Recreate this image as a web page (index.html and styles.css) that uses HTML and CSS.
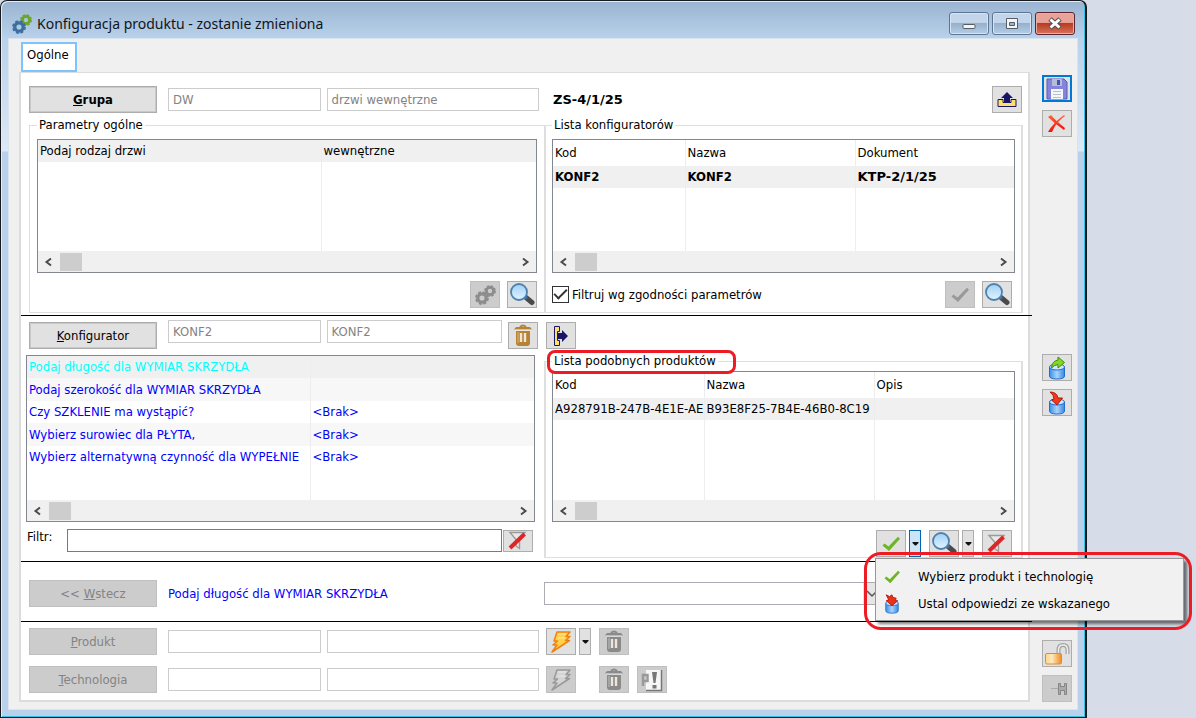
FILE: index.html
```html
<!DOCTYPE html>
<html lang="pl">
<head>
<meta charset="utf-8">
<title>Konfiguracja produktu - zostanie zmieniona</title>
<link rel="stylesheet" href="styles.css">
</head>
<body>
<svg class="sprite" aria-hidden="true">
  <defs>
    <linearGradient id="g-lens" x1="0" y1="0" x2="0" y2="1"><stop offset="0" stop-color="#9fd0f5"/><stop offset="1" stop-color="#e2f4ff"/></linearGradient>
    <linearGradient id="g-can" x1="0" y1="0" x2="1" y2="0"><stop offset="0" stop-color="#3b8ee8"/><stop offset=".5" stop-color="#a9d3fb"/><stop offset="1" stop-color="#3b86dd"/></linearGradient>
    <linearGradient id="g-lock" x1="0" y1="0" x2="1" y2="0"><stop offset="0" stop-color="#fdd58a"/><stop offset=".4" stop-color="#fde9bd"/><stop offset="1" stop-color="#f08a1e"/></linearGradient>
    <linearGradient id="g-x" x1="0" y1="0" x2="0" y2="1"><stop offset="0" stop-color="#ff6a3a"/><stop offset="1" stop-color="#ee1010"/></linearGradient>
  </defs>
  <symbol id="gear" viewBox="0 0 12 12"><g fill="none" stroke="currentColor"><circle cx="6" cy="6" r="3.600" stroke-width="2.800"/><circle cx="6" cy="6" r="5.2" stroke-width="1.400" stroke-dasharray="2.500 1.584"/></g></symbol>
  <symbol id="lens" viewBox="0 0 26 24"><path d="M17 14.500l6 5" stroke="#4a4a4a" stroke-width="5" stroke-linecap="round"/><path d="M15 13l3 2.500" stroke="#41749f" stroke-width="3"/><circle cx="10" cy="9" r="8" fill="url(#g-lens)" stroke="#4e81ad" stroke-width="1.800"/></symbol>
  <symbol id="tick" viewBox="0 0 20 16"><path d="M1.500 9.500l2-2 4 3L17 .8l2 2L8 15z" fill="currentColor"/></symbol>
  <symbol id="trash" viewBox="0 0 20 24"><path d="M7 3q3-3 6 0" fill="none" stroke="currentColor" stroke-width="2"/><path d="M1 5.500l2-2.500h14l2 2.500z" fill="currentColor"/><path d="M2 6h16" stroke="#fff" stroke-opacity=".45" stroke-width="1"/><path d="M3 7h14v12q0 3-3 3H6q-3 0-3-3z" fill="currentColor"/><path d="M8 9v9M12 9v9" stroke="#eee6da" stroke-width="2.400"/><path d="M5 8v11" stroke="#fff" stroke-opacity=".3" stroke-width="1.500"/></symbol>
  <symbol id="bolt" viewBox="0 0 24 24"><path d="M8 2h13l-4 4.500h4l-4.500 4h4L3 22l5-7H4l4.500-4H5z" fill="var(--fill)" stroke="currentColor" stroke-width="1.500" stroke-linejoin="round"/><path d="M9 4h8M9 8h7" stroke="#fff" stroke-opacity=".5" stroke-width="1"/></symbol>
  <symbol id="can" viewBox="0 0 18 24"><path d="M1.500 11v9q0 3 7.500 3t7.500-3v-9z" fill="url(#g-can)" stroke="#1f6fd0"/><ellipse cx="9" cy="11" rx="7.500" ry="3" fill="#cfe6fd" stroke="#1f6fd0"/></symbol>
  <symbol id="filter-off" viewBox="0 0 22 20"><path d="M3 1.500h15l-5.500 7v9l-3.500-2.500V8.500z" fill="#e9e9e9" stroke="#9a9a9a" stroke-width="1.400"/><path d="M3 17L17.500 3" stroke="#de2424" stroke-width="4"/></symbol>
  <symbol id="left" viewBox="0 0 10 10"><path d="M7.500 1.500L3 5l4.500 3.500" fill="none" stroke="#4c4c4c" stroke-width="2"/></symbol>
  <symbol id="right" viewBox="0 0 10 10"><path d="M2.500 1.500L7 5 2.500 8.500" fill="none" stroke="#4c4c4c" stroke-width="2"/></symbol>
  <symbol id="caret" viewBox="0 0 7 4"><path d="M.5 0h6v1L4 3.500H3L.5 1z" fill="#111"/></symbol>
</svg>

<main class="window">
  <header class="titlebar">
    <svg class="logo" viewBox="0 0 20 20"><use href="#gear" x="8" y="0" width="12" height="12" color="#6aa527"/><use href="#gear" x="0" y="6" width="14" height="14" color="#3d6f9e"/></svg>
    <h1 class="title">Konfiguracja produktu - zostanie zmieniona</h1>
    <div class="caption-buttons">
      <button class="caption" aria-label="Minimalizuj"><svg width="14" height="18"><rect x="1" y="9.500" width="12" height="4" rx="1" fill="#f5f5f5" stroke="#555d68"/></svg></button>
      <button class="caption" aria-label="Maksymalizuj"><svg width="14" height="14"><path d="M1.500 1.500h11v10h-11z" fill="#f5f5f5" stroke="#555d68"/><path d="M4.500 5.500h5v3h-5z" fill="#9db7d3" stroke="#555d68"/></svg></button>
      <button class="caption close" aria-label="Zamknij"><svg width="16" height="14"><path d="M3 2l10 9M13 2L3 11" stroke="#5b4a50" stroke-width="5"/><path d="M3.500 2.500l9 8M12.500 2.500l-9 8" stroke="#fff" stroke-width="3"/></svg></button>
    </div>
  </header>

  <div class="client">
    <div class="main">
      <nav class="tabs"><button class="tab">Ogólne</button></nav>
      <div class="panel">

        <section class="section general">
          <div class="row">
            <div class="fields wide">
              <button class="push strong"><u>G</u>rupa</button>
              <input class="field code" aria-label="Kod grupy" value="DW" disabled>
              <input class="field name-wide" aria-label="Nazwa grupy" value="drzwi wewnętrzne" disabled>
            </div>
            <div class="order">
              <strong class="number">ZS-4/1/25</strong>
              <button class="icon" aria-label="Wyślij"><svg width="20" height="18"><path d="M1 8.500h5v3h8v-3h5v7H1z" fill="#ffe066" stroke="#1a1464" stroke-width="1"/><path d="M10 1l6 6h-3v5H7V7H4z" fill="#1a1464"/></svg></button>
            </div>
          </div>
          <div class="split">
            <fieldset class="group first">
              <legend>Parametry ogólne</legend>
              <div class="list">
                <table><colgroup><col class="w-param"><col></colgroup>
                  <tbody><tr class="selected"><td>Podaj rodzaj drzwi</td><td>wewnętrzne</td></tr>
                  <tr class="fill tall"><td></td><td></td></tr></tbody></table>
                <div class="scroll"><svg><use href="#left"/></svg><i></i><svg class="end"><use href="#right"/></svg></div>
              </div>
              <div class="tools">
                <button class="icon off" disabled aria-label="Generuj"><svg width="22" height="22" color="#8c8c8c"><use href="#gear" x="10" y="1" width="12" height="12"/><use href="#gear" x="1" y="7" width="14" height="14"/></svg></button>
                <button class="icon" aria-label="Podgląd parametrów"><svg width="26" height="24"><use href="#lens"/></svg></button>
              </div>
            </fieldset>
            <fieldset class="group second">
              <legend>Lista konfiguratorów</legend>
              <div class="list">
                <table><colgroup><col class="w-code"><col class="w-name"><col></colgroup>
                  <thead><tr><th>Kod</th><th>Nazwa</th><th>Dokument</th></tr></thead>
                  <tbody><tr class="selected strong"><td>KONF2</td><td>KONF2</td><td class="number">KTP-2/1/25</td></tr>
                  <tr class="fill"><td></td><td></td><td></td></tr></tbody></table>
                <div class="scroll"><svg><use href="#left"/></svg><i></i><svg class="end"><use href="#right"/></svg></div>
              </div>
              <div class="tools">
                <label class="check"><input type="checkbox" checked>Filtruj wg zgodności parametrów</label>
                <button class="icon off" disabled aria-label="Zatwierdź"><svg width="20" height="16" color="#999"><use href="#tick"/></svg></button>
                <button class="icon" aria-label="Podgląd konfiguratora"><svg width="26" height="24"><use href="#lens"/></svg></button>
              </div>
            </fieldset>
          </div>
        </section>

        <section class="section config">
          <div class="row">
            <div class="fields">
              <button class="push"><u>K</u>onfigurator</button>
              <input class="field code" aria-label="Kod konfiguratora" value="KONF2" disabled>
              <input class="field name" aria-label="Nazwa konfiguratora" value="KONF2" disabled>
              <button class="icon" aria-label="Usuń konfigurator"><svg width="20" height="24" color="#b98232"><use href="#trash"/></svg></button>
            </div>
            <div class="order">
              <button class="icon" aria-label="Przenieś"><svg width="18" height="20"><path d="M2.500 .5h5v5h-2v9h2v5h-5z" fill="#ffe066" stroke="#1a1464"/><path d="M6 7h4V4l6 6-6 6v-3H6z" fill="#1a1464"/></svg></button>
            </div>
          </div>
          <div class="split">
            <div class="questions">
              <div class="list">
                <table><colgroup><col class="w-question"><col></colgroup>
                  <tbody>
                    <tr class="selected current"><td>Podaj długość dla WYMIAR SKRZYDŁA</td><td></td></tr>
                    <tr class="alt"><td>Podaj szerokość dla WYMIAR SKRZYDŁA</td><td></td></tr>
                    <tr><td>Czy SZKLENIE ma wystąpić?</td><td>&lt;Brak&gt;</td></tr>
                    <tr class="alt"><td>Wybierz surowiec dla PŁYTA,</td><td>&lt;Brak&gt;</td></tr>
                    <tr><td>Wybierz alternatywną czynność dla WYPEŁNIE</td><td>&lt;Brak&gt;</td></tr>
                    <tr class="fill short"><td></td><td></td></tr>
                  </tbody></table>
                <div class="scroll"><svg><use href="#left"/></svg><i></i><svg class="end"><use href="#right"/></svg></div>
              </div>
              <div class="filter">
                <label for="filter">Filtr:</label>
                <input id="filter" class="field dark">
                <button class="icon low" aria-label="Wyczyść filtr"><svg width="22" height="20"><use href="#filter-off"/></svg></button>
              </div>
            </div>
            <fieldset class="group similar">
              <legend class="marked">Lista podobnych produktów</legend>
              <div class="list">
                <table><colgroup><col class="w-product"><col class="w-name"><col></colgroup>
                  <thead><tr><th>Kod</th><th>Nazwa</th><th>Opis</th></tr></thead>
                  <tbody><tr class="selected"><td>A928791B-247B-4E1E-AE</td><td>B93E8F25-7B4E-46B0-8C19</td><td></td></tr>
                  <tr class="fill"><td></td><td></td><td></td></tr></tbody></table>
                <div class="scroll"><svg><use href="#left"/></svg><i></i><svg class="end"><use href="#right"/></svg></div>
              </div>
              <div class="tools">
                <div class="combo anchor">
                  <button class="icon" aria-label="Wybierz"><svg width="20" height="16" color="#6cb524"><use href="#tick"/></svg></button>
                  <button class="drop open" aria-label="Więcej opcji wyboru"><svg width="7" height="4"><use href="#caret"/></svg></button>
                  <div class="menu" role="menu">
                    <button class="item" role="menuitem"><svg width="18" height="14" color="#6cb524"><use href="#tick"/></svg>Wybierz produkt i technologię</button>
                    <button class="item" role="menuitem"><svg width="18" height="20" viewBox="0 0 18 24"><use href="#can" width="18" height="24"/><path d="M2 1l4 2 3-2 1 3 4 1-1 3h3l-7 6-7-6 3-1z" fill="#e8331c" stroke="#a81708"/></svg>Ustal odpowiedzi ze wskazanego</button>
                  </div>
                </div>
                <div class="combo">
                  <button class="icon" aria-label="Podgląd produktu"><svg width="26" height="24"><use href="#lens"/></svg></button>
                  <button class="drop" aria-label="Więcej opcji podglądu"><svg width="7" height="4"><use href="#caret"/></svg></button>
                </div>
                <button class="icon" aria-label="Wyczyść filtr produktów"><svg width="22" height="20"><use href="#filter-off"/></svg></button>
              </div>
            </fieldset>
          </div>
        </section>

        <section class="section answer">
          <div class="row">
            <div class="fields">
              <button class="push off" disabled>&lt;&lt; <u>W</u>stecz</button>
              <label class="question" for="answer">Podaj długość dla WYMIAR SKRZYDŁA</label>
            </div>
            <div class="select-box"><select id="answer"><option></option></select><svg width="12" height="8"><path d="M1 1l5 5 5-5" fill="none" stroke="#555" stroke-width="1.500"/></svg></div>
          </div>
        </section>

        <section class="section result">
          <div class="row">
            <div class="fields wide">
              <button class="push off" disabled><u>P</u>rodukt</button>
              <input class="field code" aria-label="Kod produktu" disabled>
              <input class="field name-wide" aria-label="Nazwa produktu" disabled>
            </div>
            <div class="order">
              <div class="combo">
                <button class="icon" aria-label="Generuj produkt"><svg class="orange" width="24" height="24"><use href="#bolt"/></svg></button>
                <button class="drop" aria-label="Więcej opcji generowania"><svg width="7" height="4"><use href="#caret"/></svg></button>
              </div>
              <button class="icon off" disabled aria-label="Usuń produkt"><svg width="20" height="24" color="#8a8a8a"><use href="#trash"/></svg></button>
            </div>
          </div>
          <div class="row">
            <div class="fields wide">
              <button class="push off" disabled><u>T</u>echnologia</button>
              <input class="field code" aria-label="Kod technologii" disabled>
              <input class="field name-wide" aria-label="Nazwa technologii" disabled>
            </div>
            <div class="order">
              <div class="combo solo">
                <button class="icon off" disabled aria-label="Generuj technologię"><svg class="gray" width="24" height="24"><use href="#bolt"/></svg></button>
              </div>
              <button class="icon off" disabled aria-label="Usuń technologię"><svg width="20" height="24" color="#8a8a8a"><use href="#trash"/></svg></button>
              <button class="icon off" disabled aria-label="Parametry technologii"><svg width="24" height="24"><path d="M6 2h15v20H6z" fill="#f6f6f6"/><path d="M21.500 2v20.500H6" fill="none" stroke="#777" stroke-width="1.500"/><path d="M3 18V7h4.500v6H4" fill="none" stroke="#999" stroke-width="2.500"/><path d="M12 4h5l-1.500 11h-2zM12.500 17h4v3.500h-4z" fill="#777"/></svg></button>
            </div>
          </div>
        </section>
      </div>
    </div>

    <aside class="sidebar">
      <button class="icon focus" aria-label="Zapisz"><svg width="22" height="22"><path d="M1 1h17l3 3v17H1z" fill="#8484dc" stroke="#5a5ab8"/><path d="M5 11h12v10H5z" fill="#f4f6fa"/><path d="M7 13.500h8M7 16.500h8M7 19.500h8" stroke="#b9c0c9"/><path d="M6 1h10v7H6z" fill="#b4bedc"/><path d="M11 2h3v5h-3z" fill="#4b53a8"/></svg></button>
      <button class="icon" aria-label="Anuluj"><svg width="20" height="20"><path d="M1 3l3-2q4 5 14 13l-1 2Q8 10 1 3z" fill="url(#g-x)"/><path d="M18 2q-9 6-13 16H1Q6 9 17 1z" fill="url(#g-x)"/></svg></button>
      <button class="icon middle" aria-label="Eksportuj odpowiedzi"><svg width="18" height="24"><use href="#can"/><path d="M3.500 12Q4 5 10 4V1l6.500 5.500L10 12V8.500Q6 9 3.500 12z" fill="#86d628" stroke="#3f8b10"/></svg></button>
      <button class="icon" aria-label="Ustal odpowiedzi"><svg width="18" height="24"><use href="#can"/><path d="M2 1q7 0 8 6h4.500L9 14 3.500 9 6 8q0-4-4-7z" fill="#f0391c" stroke="#b01b0a"/></svg></button>
      <button class="icon bottom" aria-label="Odblokuj"><svg width="26" height="24"><path d="M14.500 13V8q0-5 4.500-5t4.500 5v4" fill="none" stroke="#a2a2a2" stroke-width="4"/><path d="M14.500 13V8q0-5 4.500-5t4.500 5v4" fill="none" stroke="#eee" stroke-width="1.500"/><rect x="1.500" y="11.500" width="16" height="10.500" rx="1.500" fill="url(#g-lock)" stroke="#d98c3a"/></svg></button>
      <button class="icon off" disabled aria-label="Przypnij"><svg width="24" height="16"><path d="M6 7.500h7" stroke="#aaa"/><path d="M13.500 2.500h2v3h4v-3h2v11h-2v-4h-4v4h-2z" fill="#aaa" stroke="#858585"/></svg></button>
    </aside>
  </div>
</main>
</body>
</html>
```
FILE: styles.css
```css
* { box-sizing: border-box; }

body {
  margin: 0;
  min-height: 100vh;
  display: flex;
  background: #d6dde8;
  color: #000;
  font: 13px/16px "DejaVu Sans Condensed", "Noto Sans", sans-serif;
}

button, input, select { font: inherit; color: inherit; margin: 0; }
button { padding: 0; }
svg { display: block; flex: none; }
.sprite { position: absolute; width: 0; height: 0; }

/* Window frame */
.window {
  flex: 1;
  min-width: 0;
  margin-right: 109px;
  display: flex;
  flex-direction: column;
  padding: 0 7px 7px;
  border: 1px solid #17191c;
  border-right-width: 2px;
  border-radius: 7px 7px 0 0;
  background: linear-gradient(#99b4d1 0, #b9d1ea 37px, #dce8f5 150px, #b9d1ea 151px);
  box-shadow: inset 1px 1px #e4eef8, inset -1px -1px #35c3e4;
}
.titlebar { display: flex; align-items: center; height: 37px; padding: 8px 3px 0 4px; }
.logo { width: 20px; height: 20px; }
.title { flex: 1; margin: 0 0 0 5px; font: 14px/20px "Noto Sans", sans-serif; color: #10151c; }
.caption-buttons { display: flex; align-self: flex-start; gap: 3px; margin-top: 3px; }
.caption {
  width: 40px;
  height: 23px;
  display: grid;
  place-items: center;
  border: 1px solid #5f7692;
  border-radius: 3px;
  box-shadow: inset 0 0 0 1px #d5e3f2;
  background: linear-gradient(#c2d5ea 0 45%, #96b0cd 50%, #b5cde6);
}
.close { border-color: #5a2530; box-shadow: inset 0 0 0 1px #e6b0a8; background: linear-gradient(#e8a297 0 45%, #b93a20 50%, #d8735a); }

.client { flex: 1; display: flex; background: #f0f0f0; border: 1px solid #dae4ef; padding: 3px 5px 7px 10px; }
.main { flex: 1; min-width: 0; display: flex; flex-direction: column; }
.tab { height: 30px; margin-left: 2px; padding: 0 6px 4px 4px; border: 2px solid #7cc4fb; background: #fff; display: block; }
.panel { flex: 1; border: 2px solid #dcdcdc; border-top-width: 1px; background: #fff; }

/* Sections */
.section { border-bottom: 1px solid #000; margin-right: -4px; padding-right: 8px; }
.section.result { border: 0; }
.general { padding-top: 13px; padding-bottom: 2px; }
.config { padding-top: 4px; padding-bottom: 3px; }
.answer { padding-top: 18px; padding-bottom: 14px; }
.result { padding-top: 6px; display: grid; gap: 11px; }
.row, .split { display: grid; grid-template-columns: minmax(0, 515fr) minmax(0, 480fr); padding-left: 8px; }
.row { align-items: center; }
.fields { display: flex; align-items: center; padding-right: 6px; min-width: 0; }
.fields.wide { padding-right: 5px; }
.order { display: flex; align-items: center; justify-content: space-between; padding: 0 2px 0 9px; }
.config .order, .result .order { justify-content: flex-start; padding-left: 2px; }
.config .row { align-items: stretch; height: 29px; }
.config .fields, .config .order { align-items: flex-end; }
.config .field.code, .config .field.name { align-self: flex-start; }

.push { width: 128px; height: 27px; flex: none; margin-right: 11px; border: 1px solid #adadad; outline: 1px solid #c9c9c9; outline-offset: -2px; background: #e1e1e1; }
.strong { font-weight: bold; }
.number { font-family: "DejaVu Sans", sans-serif; }
.off { background: #ccc; border-color: #bfbfbf; color: #838383; }
.push.off { outline: 0; }
.field { height: 23px; min-width: 0; padding: 0 4px; border: 1px solid #ccc; background: #fff; color: #838383; border-radius: 0; }
.code { flex: 150 1 0; margin-right: 6px; }
.name-wide { flex: 213 1 0; }
.name { flex: 174 1 0; margin-right: 6px; }
.dark { flex: 1; border-color: #7a7a7a; color: #000; }

.icon { width: 30px; height: 27px; flex: none; display: grid; place-items: center; border: 1px solid #adadad; background: #e1e1e1; overflow: hidden; }
.icon.off { background: #ccc; border-color: #bfbfbf; }
.icon.focus { border: 2px solid #0078d7; }
.icon.low { height: 22px; }
.drop { width: 12px; height: 27px; display: grid; place-items: center; border: 1px solid #adadad; background: #e1e1e1; }
.drop.open { border-color: #0065b3; background: #cce4f7; }
.combo { display: flex; gap: 3px; }
.solo { width: 45px; }
.result .order { gap: 8px; }
.orange { color: #f08010; --fill: #ffd24a; }
.gray { color: #999; --fill: #d4d4d4; }

/* Groups and lists */
.split { margin-top: 4px; }
.group { min-width: 0; margin: 0; padding: 6px 6px 4px; border: 2px solid #dfdfdf; border-top-width: 1px; border-bottom-width: 1px; }
.group.first { border-right: 0; border-left-width: 1px; padding-left: 7px; padding-right: 7px; }
.second, .similar { margin-right: 1px; }
legend { margin-left: 0; padding: 0 2px; }
.list { border: 1px solid #828790; background: #fff; }
table { width: 100%; table-layout: fixed; border-collapse: collapse; }
th, td { height: 22px; padding: 0 0 0 2px; text-align: left; font-weight: inherit; white-space: nowrap; overflow: hidden; border-right: 1px solid #ededed; }
th:last-child, td:last-child { border-right: 0; }
th { height: 26px; }
.selected { background: #f0f0f0; }
.alt { background: #f7f7f7; }
.fill td { height: 63px; }
.fill.tall td { height: 89px; }
.fill.short td { height: 32px; }
.w-param { width: 283px; }
.w-code { width: 132px; }
.w-name { width: 170px; }
.w-product { width: 151px; }
.w-question { width: 283px; }
.similar .fill td { height: 80px; }
.scroll { display: flex; align-items: center; height: 21px; padding: 0 5px; background: #f0f0f0; }
.scroll svg { width: 11px; height: 10px; }
.scroll i { width: 22px; height: 18px; margin-left: 6px; background: #cdcdcd; }
.scroll .end { margin-left: auto; }
.tools { display: flex; align-items: center; justify-content: flex-end; gap: 7px; padding-top: 8px; }
.second .tools, .similar .tools { padding-right: 3px; }
.check { display: flex; align-items: center; gap: 3px; margin-right: auto; }
.check input {
  appearance: none;
  width: 17px;
  height: 17px;
  border: 1px solid #333;
  background: #fff;
  display: grid;
  place-items: center;
}
.check input::after { content: ""; width: 11px; height: 5px; border: solid #333; border-width: 0 0 2px 2px; rotate: -45deg; translate: 0 -2px; }
.group.similar { padding-top: 2px; padding-bottom: 0; }
.similar .combo { margin-right: 1px; }

.questions { margin: 2px 9px 0 -3px; min-width: 0; color: #00f; }
.alt td { height: 23px; }
.current { color: #0ff; }
.filter { display: flex; align-items: flex-start; padding: 7px 2px 0 1px; color: #000; }
.filter label { width: 40px; }
.filter .icon { margin: 1px 0 0 1px; }

.question { color: #00f; }
.select-box { position: relative; width: 337px; }
.select-box select { display: block; appearance: none; width: 100%; height: 23px; border: 1px solid #acacb4; border-radius: 0; background: linear-gradient(to left, #e6e6e6 17px, #fff 17px); }
.select-box svg { position: absolute; right: 3px; top: 8px; }

/* Popup menu and markers */
.anchor { position: relative; }
.menu {
  position: absolute;
  left: -1px;
  top: 28px;
  z-index: 2;
  width: 309px;
  padding: 4px 3px 3px;
  border: 1px solid #979797;
  background: #f1f1f1;
  box-shadow: 3px 3px 3px #0008;
}
.menu::after { content: ""; position: absolute; inset: -7px -9px -10px -12px; border: 3px solid #ed1c24; border-radius: 17px; pointer-events: none; }
.item { display: flex; align-items: center; gap: 17px; width: 100%; height: 27px; padding-left: 4px; border: 0; background: none; }
.marked { position: relative; }
.marked::after { content: ""; position: absolute; inset: -3px -18px -5px -5px; border: 3px solid #ed1c24; border-radius: 8px; pointer-events: none; }

.sidebar { width: 30px; margin-left: 12px; padding-top: 33px; display: flex; flex-direction: column; gap: 8px; }
.sidebar .middle { margin-top: 209px; }
.sidebar .bottom { margin-top: auto; }
```
